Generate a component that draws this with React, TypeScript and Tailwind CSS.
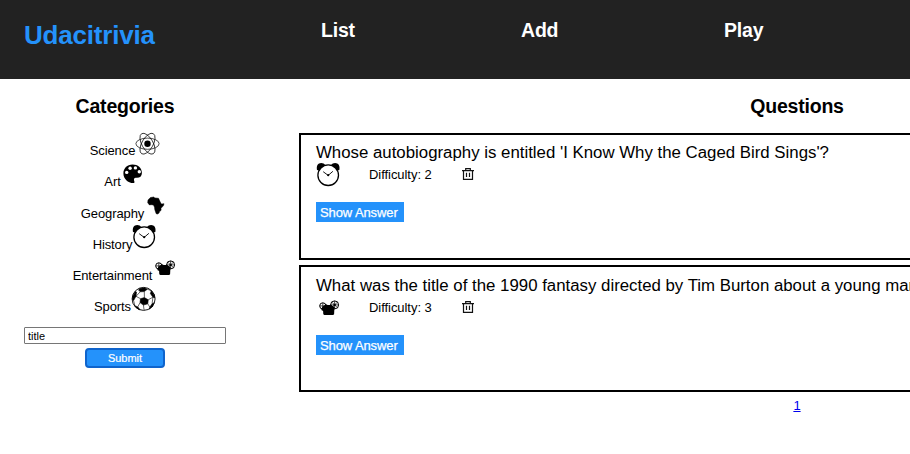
import type { ReactNode } from 'react';

function Glyph({ children }: { children: ReactNode }) {
  return (
    <svg viewBox="0 0 25 25" className="inline-block h-[25px] w-[25px] shrink-0 align-baseline">
      {children}
    </svg>
  );
}

function Science() {
  return (
    <Glyph>
      <g fill="none" stroke="#000" strokeWidth="0.7">
        <ellipse cx="12.5" cy="13.7" rx="11.6" ry="5.6" />
        <ellipse cx="12.5" cy="13.7" rx="11.6" ry="5.6" transform="rotate(60 12.5 13.7)" />
        <ellipse cx="12.5" cy="13.7" rx="11.6" ry="5.6" transform="rotate(120 12.5 13.7)" />
      </g>
      <circle cx="12.5" cy="13.7" r="3.2" />
    </Glyph>
  );
}

function Art() {
  return (
    <Glyph>
      <path d="M11.6 3.5C6 3.5 2.4 7.4 2.4 12.4c0 5.300 4.500 9.600 9.800 9.600 1.400 0 1.500-.8 1.100-1.800-.7-1.700-.5-3.700 1.900-3.500 3.300.3 5.700-1.300 5.700-4.800 0-4.900-4.100-8.400-9.300-8.400z" />
      <g fill="#fff">
        <circle cx="9.100" cy="7.200" r="1.700" />
        <circle cx="14.400" cy="6.900" r="1.700" />
        <circle cx="5.700" cy="11.400" r="1.700" />
        <circle cx="18.300" cy="10.700" r="1.700" />
      </g>
    </Glyph>
  );
}

function Geography() {
  return (
    <Glyph>
      <path d="M6.500 4.500 9.800 4l1 .9 3.700.4 2.200 4.800 1 .9 2.300-.3-.5 1.900-2.500 2.700.1 2-1.500 1.300-.6 1.500-1.400.9-1.400-.3-1.400-4-.3-2.400-1-2.300-2.300-.3-1.800.2-1.700-2.200.3-2.800z" stroke="#000" strokeWidth="0.500" />
    </Glyph>
  );
}

function History() {
  return (
    <Glyph>
      <path d="M.9 7.200C.3 3.700 2 .9 5.200.9c1.700 0 3.200.8 4 2L2.300 8.700z" />
      <path d="M23.400 7.200c.6-3.500-1.100-6.300-4.300-6.300-1.700 0-3.200.8-4 2L22 8.700z" />
      <circle cx="12.200" cy="13.200" r="10.300" fill="#fff" stroke="#000" strokeWidth="1.300" />
      <path d="M7.200 9.700l5 3.700 4.700-4.100" fill="none" stroke="#000" strokeWidth="0.900" />
      <circle cx="12.200" cy="13.200" r="1.100" />
    </Glyph>
  );
}

function Entertainment() {
  return (
    <Glyph>
      <g fill="none" stroke="#000">
        <circle cx="6.800" cy="10.900" r="3.100" strokeWidth="1" />
        <circle cx="18.600" cy="9.900" r="4" strokeWidth="1" />
        <path d="M6.800 7.800v6.200M3.700 10.900h6.200M18.600 5.900v8M14.600 9.900h8M15.800 7.100l5.600 5.600M21.400 7.100l-5.600 5.600" strokeWidth="0.700" />
      </g>
      <path d="M6.300 11.800 8.800 10l1.500-.7 1.300.7h2.200l1-.6 1.600 1.400 2.300 1.500-.4 2.900-.2 4-1 .8H8.300l-1-.7-.2-3.200-1.800-1z" />
      <circle cx="18.600" cy="9.900" r="1.200" />
    </Glyph>
  );
}

function Sports() {
  return (
    <Glyph>
      <circle cx="12.600" cy="12.900" r="11.500" fill="#fff" stroke="#000" strokeWidth="0.900" />
      <g stroke="#000" strokeWidth="0.600">
        <path d="M9.500 12.700 13.400 11.600l3.800 2.200-.4 4-4.400 1.300-3.400-2.500z" />
        <path d="M8.600 2.500 13.500 1.800l2.800 1.400-3 2.400-4.100.2-1.600-1.700z" />
        <path d="M1.600 10.500l2.700-5 1.200.6-.5 4.200-2.400 4.200-1.100-1z" />
        <path d="M20.300 4.700l3 4.100.5 3-1.900-.6-2.500-3.600z" />
        <path d="M3.800 19.700l3 1.200 2.200 2.700-1.300-.2-2.700-1.900z" />
        <path d="M22.900 16.800l-1.200 3.600-3.400 2.800.5-2.100 2.300-3.300z" />
        <path d="M13.300 5.600l.1 6M9.200 5.800l-4.200 4.500M5 10.300l4.500 2.400M9 16.600l-2.200 4.300M2.600 14.500l1.200 5.200M16.800 17.800l2 3.300M17.200 13.800l4.700-2.600M16.300 3.200l4 1.500M12.400 19.100l.7 5M21.900 11.200l-.8 6.600" fill="none" />
      </g>
    </Glyph>
  );
}

function Trash() {
  return (
    <svg viewBox="0 0 12 12" className="mt-[6px] h-3 w-3" fill="none" stroke="#111" strokeWidth="1.200">
      <path d="M0 2.600h12M3.700 2.600V.7h4.600v1.900M1.500 2.600v8.700h9V2.600M4.500 4.800v4.200M7.500 4.800v4.200" />
    </svg>
  );
}

const categories = [
  { name: 'Science', icon: <Science />, row: 'h-[31px]' },
  { name: 'Art', icon: <Art />, row: 'h-8' },
  { name: 'Geography', icon: <Geography />, row: 'h-[31px]' },
  { name: 'History', icon: <History />, row: 'h-[31px]' },
  { name: 'Entertainment', icon: <Entertainment />, row: 'h-[31px]' },
  { name: 'Sports', icon: <Sports />, row: 'h-[31px]' },
];

function Question({ text, icon, difficulty, className }: { text: string; icon: ReactNode; difficulty: number; className: string }) {
  return (
    <article className={`mb-[5px] h-[127px] border-2 border-black pl-[15px] ${className}`}>
      <div className="h-[19px] text-[16.820px] leading-5 whitespace-nowrap">{text}</div>
      <div className="flex h-[25px] items-start">
        {icon}
        <div className="ml-7 w-[93px] pt-[5px] leading-[15px] tracking-[-0.05px]">Difficulty: {difficulty}</div>
        <Trash />
      </div>
      <button className="mt-[15px] block h-5 w-[88px] bg-[#2492fb] pt-px pl-[4px] text-left leading-[19px] tracking-[-0.1px] whitespace-nowrap text-white [-webkit-text-stroke:0.25px_white]">
        Show Answer
      </button>
    </article>
  );
}

export default function App() {
  return (
    <div className="h-[454px] w-[910px] overflow-hidden bg-white font-['Liberation_Sans',Arial,sans-serif] text-[13px] text-black">
      <header className="flex h-[79px] bg-[#222] pl-6 font-bold">
        <h1 className="w-[297px] pt-5 text-[26px] leading-[30px] tracking-[-0.2px] text-[#2492fb]">Udacitrivia</h1>
        <nav className="flex pt-[19px] text-[19.500px] leading-[22px] tracking-[-0.2px] text-white">
          <a className="w-[200px]">List</a>
          <a className="w-[203px]">Add</a>
          <a>Play</a>
        </nav>
      </header>
      <main className="flex">
        <aside className="w-[250px] shrink-0 pt-4 text-center">
          <h2 className="h-[35px] text-[19.500px] leading-[22px] font-bold tracking-[-0.2px]">Categories</h2>
          <ul className="tracking-[-0.1px]">
            {categories.map((c) => (
              <li key={c.name} className={`leading-[15px] whitespace-nowrap ${c.row}`}>
                {c.name}
                {c.icon}
              </li>
            ))}
          </ul>
          <form className="mt-[10px] flex flex-col items-center gap-1">
            <input
              defaultValue="title"
              className="block h-[17px] w-[202px] rounded-[1px] border border-[#767676] px-[3px] text-[11px] leading-[13px]"
            />
            <button
              type="button"
              className="h-5 w-20 rounded-[4px] border-2 border-[#0f64cc] bg-[#2492fb] text-[11px] leading-4 text-white [-webkit-text-stroke:0.2px_white]"
            >
              Submit
            </button>
          </form>
        </aside>
        <section className="ml-[49px] w-[996px] shrink-0 pt-4">
          <h2 className="h-[38px] text-center text-[19.500px] leading-[22px] font-bold tracking-[-0.2px]">Questions</h2>
          <Question
            text="Whose autobiography is entitled 'I Know Why the Caged Bird Sings'?"
            icon={<History />}
            difficulty={2}
            className="pt-2"
          />
          <Question
            text="What was the title of the 1990 fantasy directed by Tim Burton about a young man with multi-bladed appendages?"
            icon={<Entertainment />}
            difficulty={3}
            className="pt-[9px]"
          />
          <div className="pt-px text-center leading-[15px]">
            <a className="text-[#0000ee] underline">1</a>
          </div>
        </section>
      </main>
    </div>
  );
}
